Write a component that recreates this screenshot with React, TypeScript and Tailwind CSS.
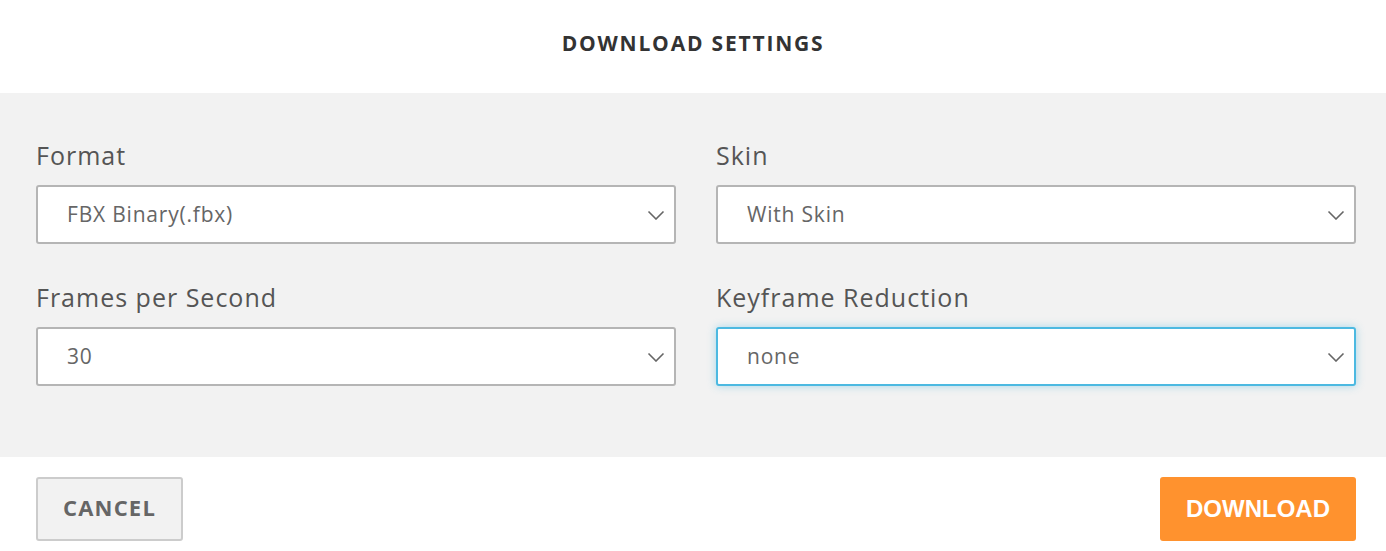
import { ReactNode } from "react";

const fields = [
  [
    { label: "Format", value: "FBX Binary(.fbx)" },
    { label: "Skin", value: "With Skin" },
  ],
  [
    { label: "Frames per Second", value: "30" },
    { label: "Keyframe Reduction", value: "none", focused: true },
  ],
];

function Chevron() {
  return (
    <svg width="18" height="10" viewBox="0 0 18 10" fill="none">
      <path d="M1.5 1.5l7.5 7.5 7.5-7.5" stroke="#666" strokeWidth="1.6" />
    </svg>
  );
}

function Field({
  label,
  value,
  focused,
}: {
  label: string;
  value: string;
  focused?: boolean;
}) {
  return (
    <div className="flex flex-col">
      <label className="h-[30px] text-[25px] leading-[30px] tracking-[1px] text-[#555]">{label}</label>
      <div
        className={
          focused
            ? "mt-[15px] flex h-[59px] items-center justify-between rounded-[3px] border-2 border-[#4cb9e1] bg-white pl-[29px] pr-[9px] shadow-[0_0_8px_rgba(76,185,225,0.45)]"
            : "mt-[15px] flex h-[59px] items-center justify-between rounded-[3px] border-2 border-[#b5b5b5] bg-white pl-[29px] pr-[9px]"
        }
      >
        <span className="pt-[1px] text-[21px] tracking-[0.8px] text-[#666]">{value}</span>
        <Chevron />
      </div>
    </div>
  );
}

function Row({ children }: { children: ReactNode }) {
  return <div className="grid grid-cols-2 gap-x-[40px]">{children}</div>;
}

export default function App() {
  return (
    <div className="h-[551px] w-[1386px] overflow-hidden bg-white font-['Open_Sans',sans-serif]">
      <div className="flex h-[93px] items-center justify-center pb-[5px]">
        <h2 className="text-[21px] font-bold tracking-[1.8px] text-[#333]">DOWNLOAD SETTINGS</h2>
      </div>
      <div className="flex h-[364px] flex-col gap-y-[38px] bg-[#f2f2f2] pl-[36px] pr-[30px] pt-[47px]">
        {fields.map((row, i) => (
          <Row key={i}>
            {row.map((f) => (
              <Field key={f.label} {...f} />
            ))}
          </Row>
        ))}
      </div>
      <div className="flex items-start justify-between pl-[36px] pr-[30px] pt-[20px]">
        <button className="h-[64px] w-[147px] rounded-[3px] border-2 border-[#ccc] bg-[#f2f2f2] pb-[3px] text-[22px] font-bold tracking-[1.2px] text-[#666]">
          CANCEL
        </button>
        <button className="h-[64px] w-[196px] rounded-[3px] bg-[#ff922e] font-['Liberation_Sans',sans-serif] text-[24px] font-bold text-white">
          DOWNLOAD
        </button>
      </div>
    </div>
  );
}
